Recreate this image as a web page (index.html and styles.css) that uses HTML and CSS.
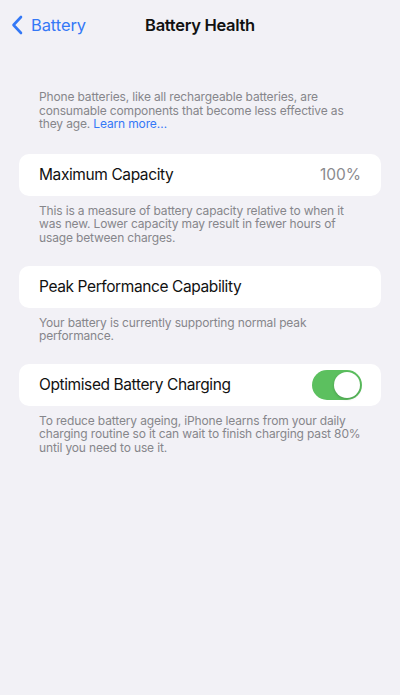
FILE: index.html
```html
<!DOCTYPE html>
<html>
<head>
<meta charset="utf-8">
<link rel="stylesheet" href="styles.css">
</head>
<body>
<div class="screen">
  <header class="nav">
    <a class="back">
      <svg class="chev" width="12" height="20" viewBox="0 0 12 20"><path d="M10 2 L2.5 10 L10 18" fill="none" stroke="#3478f6" stroke-width="2.6" stroke-linecap="round" stroke-linejoin="round"/></svg>
      <span>Battery</span>
    </a>
    <h1 class="title">Battery Health</h1>
  </header>

  <p class="intro">Phone batteries, like all rechargeable batteries, are consumable components that become less effective as they age. <span class="link">Learn more…</span></p>

  <section class="group">
    <div class="card"><span class="label">Maximum Capacity</span><span class="value">100%</span></div>
    <p class="foot">This is a measure of battery capacity relative to when it was new. Lower capacity may result in fewer hours of usage between charges.</p>
  </section>

  <section class="group">
    <div class="card"><span class="label">Peak Performance Capability</span></div>
    <p class="foot">Your battery is currently supporting normal peak performance.</p>
  </section>

  <section class="group">
    <div class="card"><span class="label">Optimised Battery Charging</span><span class="toggle"><span class="knob"></span></span></div>
    <p class="foot">To reduce battery ageing, iPhone learns from your daily charging routine so it can wait to finish charging past 80% until you need to use it.</p>
  </section>
</div>
</body>
</html>
```
FILE: styles.css
```css
html, body {
  margin: 0;
  padding: 0;
  background: #f2f1f6;
}
body {
  font-family: Inter, "Noto Sans", sans-serif;
  width: 400px;
  height: 695px;
  overflow: hidden;
}
.screen {
  display: flex;
  flex-direction: column;
}
.nav {
  position: relative;
  height: 50px;
  display: flex;
  align-items: center;
}
.back {
  display: flex;
  align-items: center;
  gap: 8px;
  padding-left: 11px;
  color: #3478f6;
  font-size: 16.5px;
  letter-spacing: -0.1px;
  margin-top: -1px;
}
.chev { display: block; }
.title {
  position: absolute;
  left: 0;
  right: 0;
  top: 0;
  height: 50px;
  line-height: 50px;
  margin: 0;
  text-align: center;
  font-size: 16.5px;
  font-weight: 600;
  letter-spacing: -0.3px;
  color: #111;
  pointer-events: none;
}
.intro, .foot {
  margin: 0;
  font-size: 12px;
  line-height: 13.6px;
  letter-spacing: -0.15px;
  color: #86868b;
}
.intro { margin-top: 40px; margin-bottom: 23px; padding: 0 45px 0 39px; }
.link { color: #3478f6; }
.group { margin: 0 19px 21px; display: flex; flex-direction: column; }
.group .foot { padding: 8px 20px 0 20px; }
.card {
  background: #fff;
  border-radius: 10px;
  height: 42px;
  display: flex;
  align-items: center;
  justify-content: space-between;
  padding: 0 20px;
  font-size: 15.5px;
  letter-spacing: -0.4px;
  color: #111;
}
.value { color: #8a8a8e; letter-spacing: 0; }
.toggle {
  width: 50px;
  height: 30px;
  border-radius: 15px;
  background: #5cc05f;
  position: relative;
  margin-right: -1px;
}
.knob {
  position: absolute;
  right: 2px;
  top: 2px;
  width: 26px;
  height: 26px;
  border-radius: 50%;
  background: #fff;
  box-shadow: 0 1px 3px rgba(0,0,0,0.2);
}
```
